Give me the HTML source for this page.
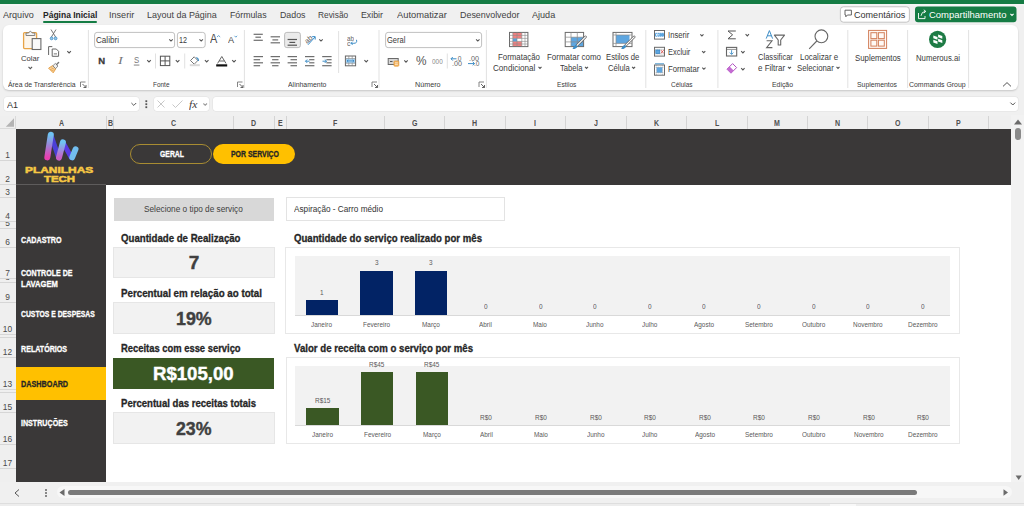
<!DOCTYPE html>
<html><head><meta charset="utf-8"><style>
html,body{margin:0;padding:0;width:1024px;height:506px;overflow:hidden;background:#F0F0F0;}
body{position:relative;font-family:'Liberation Sans', sans-serif;}
.t{position:absolute;white-space:nowrap;}
svg{position:absolute;overflow:visible;}
</style></head><body>
<div style="position:absolute;left:0px;top:0px;width:1024px;height:3.8px;background:#157C44"></div><div style="position:absolute;left:0px;top:3.8px;width:1024px;height:2.2px;background:#F4F5F4"></div><div style="position:absolute;left:43px;top:20.6px;width:54.3px;height:2.0px;background:#157C44;border-radius:1px"></div><div style="position:absolute;left:3px;top:25px;width:1015px;height:65px;background:#FFFFFF;border-radius:6px;box-shadow:0 1px 2px rgba(0,0,0,0.18)"></div><div style="position:absolute;left:3.5px;top:96.6px;width:135.5px;height:14.800000000000011px;background:#fff;border-radius:3px;box-shadow:0 0 0 0.5px #e0e0e0"></div><div style="position:absolute;left:153.6px;top:96.6px;width:55.80000000000001px;height:14.800000000000011px;background:#fff;border-radius:3px;box-shadow:0 0 0 0.5px #e0e0e0"></div><div style="position:absolute;left:213.4px;top:96.6px;width:804.6px;height:14.800000000000011px;background:#fff;border-radius:3px;box-shadow:0 0 0 0.5px #e0e0e0"></div><div style="position:absolute;left:0px;top:115.5px;width:1011px;height:13.5px;background:#EFEFEF"></div><div style="position:absolute;left:106.0px;top:115.5px;width:1.0px;height:13.5px;background:#D4D4D4"></div><div style="position:absolute;left:113.2px;top:115.5px;width:1.0px;height:13.5px;background:#D4D4D4"></div><div style="position:absolute;left:233.0px;top:115.5px;width:1.0px;height:13.5px;background:#D4D4D4"></div><div style="position:absolute;left:273.9px;top:115.5px;width:1.0px;height:13.5px;background:#D4D4D4"></div><div style="position:absolute;left:286.1px;top:115.5px;width:1.0px;height:13.5px;background:#D4D4D4"></div><div style="position:absolute;left:384.0px;top:115.5px;width:1.0px;height:13.5px;background:#D4D4D4"></div><div style="position:absolute;left:444.0px;top:115.5px;width:1.0px;height:13.5px;background:#D4D4D4"></div><div style="position:absolute;left:504.7px;top:115.5px;width:1.0px;height:13.5px;background:#D4D4D4"></div><div style="position:absolute;left:565.0px;top:115.5px;width:1.0px;height:13.5px;background:#D4D4D4"></div><div style="position:absolute;left:625.7px;top:115.5px;width:1.0px;height:13.5px;background:#D4D4D4"></div><div style="position:absolute;left:686.0px;top:115.5px;width:1.0px;height:13.5px;background:#D4D4D4"></div><div style="position:absolute;left:746.7px;top:115.5px;width:1.0px;height:13.5px;background:#D4D4D4"></div><div style="position:absolute;left:807.0px;top:115.5px;width:1.0px;height:13.5px;background:#D4D4D4"></div><div style="position:absolute;left:867.2px;top:115.5px;width:1.0px;height:13.5px;background:#D4D4D4"></div><div style="position:absolute;left:928.0px;top:115.5px;width:1.0px;height:13.5px;background:#D4D4D4"></div><div style="position:absolute;left:988.2px;top:115.5px;width:1.0px;height:13.5px;background:#D4D4D4"></div><div style="position:absolute;left:1010.5px;top:115.5px;width:1.0px;height:13.5px;background:#D4D4D4"></div><div style="position:absolute;left:0px;top:129px;width:16px;height:353px;background:#EFEFEF"></div><div style="position:absolute;left:0px;top:159.5px;width:16px;height:1.0px;background:#D6D6D6"></div><div style="position:absolute;left:0px;top:183.5px;width:16px;height:1.0px;background:#D6D6D6"></div><div style="position:absolute;left:0px;top:196.5px;width:16px;height:1.0px;background:#D6D6D6"></div><div style="position:absolute;left:0px;top:220.5px;width:16px;height:1.0px;background:#D6D6D6"></div><div style="position:absolute;left:0px;top:227.5px;width:16px;height:1.0px;background:#D6D6D6"></div><div style="position:absolute;left:0px;top:246.5px;width:16px;height:1.0px;background:#D6D6D6"></div><div style="position:absolute;left:0px;top:278.0px;width:16px;height:1.0px;background:#D6D6D6"></div><div style="position:absolute;left:0px;top:281.5px;width:16px;height:1.0px;background:#D6D6D6"></div><div style="position:absolute;left:0px;top:302.0px;width:16px;height:1.0px;background:#D6D6D6"></div><div style="position:absolute;left:0px;top:333.5px;width:16px;height:1.0px;background:#D6D6D6"></div><div style="position:absolute;left:0px;top:336.5px;width:16px;height:1.0px;background:#D6D6D6"></div><div style="position:absolute;left:0px;top:357.0px;width:16px;height:1.0px;background:#D6D6D6"></div><div style="position:absolute;left:0px;top:388.5px;width:16px;height:1.0px;background:#D6D6D6"></div><div style="position:absolute;left:0px;top:391.5px;width:16px;height:1.0px;background:#D6D6D6"></div><div style="position:absolute;left:0px;top:411.5px;width:16px;height:1.0px;background:#D6D6D6"></div><div style="position:absolute;left:0px;top:443.5px;width:16px;height:1.0px;background:#D6D6D6"></div><div style="position:absolute;left:0px;top:467.5px;width:16px;height:1.0px;background:#D6D6D6"></div><svg style="left:0;top:115px" width="16" height="14"><polygon points="14,3.2 14,11.8 5.8,11.8" fill="#B4B4B4"/></svg><div style="position:absolute;left:15px;top:116px;width:1px;height:13px;background:#DADADA"></div><div style="position:absolute;left:0px;top:128px;width:16px;height:1px;background:#DADADA"></div><div style="position:absolute;left:16px;top:129px;width:995px;height:353px;background:#FFFFFF"></div><div style="position:absolute;left:16px;top:129px;width:995px;height:55.599999999999994px;background:#3A3838"></div><div style="position:absolute;left:16px;top:184px;width:90px;height:1px;background:#5E5C5C"></div><div style="position:absolute;left:16px;top:185px;width:90px;height:297px;background:#3A3838"></div><div style="position:absolute;left:16px;top:367px;width:90px;height:32.80000000000001px;background:#FFC000"></div><div style="position:absolute;left:130.2px;top:143.6px;width:81.60000000000002px;height:20.400000000000006px;border:1.2px solid #A88C32;border-radius:11px;box-sizing:border-box"></div><div style="position:absolute;left:213.4px;top:144.4px;width:81.99999999999997px;height:19.900000000000006px;background:#FFC000;border-radius:10px"></div><div style="position:absolute;left:113.8px;top:197.8px;width:160.2px;height:23.399999999999977px;background:#D8D8D8"></div><div style="position:absolute;left:286.3px;top:197px;width:219.2px;height:24.19999999999999px;background:#fff;border:1px solid #E3E3E3;box-sizing:border-box"></div><div style="position:absolute;left:113.2px;top:247.3px;width:161.8px;height:31.19999999999999px;background:#F2F2F2;border:1px solid #E6E6E6;box-sizing:border-box"></div><div style="position:absolute;left:113.2px;top:302.1px;width:161.8px;height:31.69999999999999px;background:#F2F2F2;border:1px solid #E6E6E6;box-sizing:border-box"></div><div style="position:absolute;left:113.2px;top:358px;width:161.3px;height:30.80000000000001px;background:#3A5824"></div><div style="position:absolute;left:113.2px;top:412.3px;width:161.8px;height:32.19999999999999px;background:#F2F2F2;border:1px solid #E6E6E6;box-sizing:border-box"></div><div style="position:absolute;left:285px;top:247px;width:674.8px;height:86.60000000000002px;background:#fff;border:1px solid #E8E8E8;box-sizing:border-box"></div><div style="position:absolute;left:294.8px;top:255.7px;width:655.2px;height:59.10000000000002px;background:#F2F2F2"></div><div style="position:absolute;left:294.8px;top:314.8px;width:655.2px;height:1.0px;background:#D9D9D9"></div><div style="position:absolute;left:305.75px;top:299.5px;width:32.299999999999955px;height:15.300000000000011px;background:#022365"></div><div style="position:absolute;left:360.35px;top:270.5px;width:32.299999999999955px;height:44.30000000000001px;background:#022365"></div><div style="position:absolute;left:414.95px;top:270.5px;width:32.299999999999955px;height:44.30000000000001px;background:#022365"></div><div style="position:absolute;left:286px;top:357.3px;width:673.8px;height:86.30000000000001px;background:#fff;border:1px solid #E8E8E8;box-sizing:border-box"></div><div style="position:absolute;left:294.8px;top:366.4px;width:655.2px;height:58.400000000000034px;background:#F2F2F2"></div><div style="position:absolute;left:294.8px;top:424.8px;width:655.2px;height:1.0px;background:#D9D9D9"></div><div style="position:absolute;left:306.35px;top:407.7px;width:32.299999999999955px;height:17.100000000000023px;background:#3A5824"></div><div style="position:absolute;left:360.95000000000005px;top:372px;width:32.299999999999955px;height:52.80000000000001px;background:#3A5824"></div><div style="position:absolute;left:415.55px;top:372px;width:32.299999999999955px;height:52.80000000000001px;background:#3A5824"></div><div style="position:absolute;left:1011px;top:115px;width:13px;height:367px;background:#F2F2F2"></div><svg style="left:1014px;top:119px" width="8" height="6"><polygon points="4,0.5 8,5.5 0,5.5" fill="#6B6B6B"/></svg><div style="position:absolute;left:1015px;top:128px;width:6px;height:12px;background:#8A8A8A;border-radius:3px"></div><svg style="left:1014.6px;top:474.6px" width="8" height="6"><polygon points="0.6,0.4 6.8,0.4 3.7,5" fill="#6B6B6B"/></svg><div style="position:absolute;left:0px;top:482px;width:1024px;height:21px;background:#F0F0F0"></div><div style="position:absolute;left:0px;top:502.6px;width:1024px;height:1.0px;background:#DEDEDE"></div><div style="position:absolute;left:0px;top:503.6px;width:1024px;height:2.3999999999999773px;background:#EDEDED"></div><div style="position:absolute;left:830px;top:503.6px;width:26px;height:2.3999999999999773px;background:#F8F8F8"></div><div style="position:absolute;left:57px;top:486.3px;width:955px;height:11.899999999999977px;background:#F7F7F7;border-radius:6px"></div><svg style="left:14px;top:489px" width="6" height="8"><polyline points="5,0.5 1,4 5,7.5" fill="none" stroke="#555" stroke-width="1"/></svg><div style="position:absolute;left:45px;top:489.4px;width:2px;height:1.8000000000000114px;background:#666;border-radius:1px"></div><div style="position:absolute;left:45px;top:492.2px;width:2px;height:1.8000000000000114px;background:#666;border-radius:1px"></div><div style="position:absolute;left:45px;top:495px;width:2px;height:1.8000000000000114px;background:#666;border-radius:1px"></div><svg style="left:59px;top:489px" width="6" height="7"><polygon points="5.5,0 5.5,7 0.5,3.5" fill="#6B6B6B"/></svg><div style="position:absolute;left:68px;top:490px;width:849px;height:5.300000000000011px;background:#7A7A7A;border-radius:3px"></div><svg style="left:1002.6px;top:489px" width="6" height="7"><polygon points="0.5,0.2 0.5,6.8 5,3.5" fill="#6B6B6B"/></svg><svg style="left:0;top:0" width="1024" height="115" viewBox="0 0 1024 115"><rect x="87.9" y="30" width="1" height="58" fill="#E1E1E1"/><rect x="243.9" y="30" width="1" height="58" fill="#E1E1E1"/><rect x="378.5" y="30" width="1" height="58" fill="#E1E1E1"/><rect x="485.9" y="30" width="1" height="58" fill="#E1E1E1"/><rect x="645.3" y="30" width="1" height="58" fill="#E1E1E1"/><rect x="717.4" y="30" width="1" height="58" fill="#E1E1E1"/><rect x="847.3" y="30" width="1" height="58" fill="#E1E1E1"/><rect x="907.1" y="30" width="1" height="58" fill="#E1E1E1"/><rect x="968.1" y="30" width="1" height="58" fill="#E1E1E1"/><rect x="155.0" y="53.5" width="1" height="15.0" fill="#E1E1E1"/><rect x="184.2" y="53.5" width="1" height="15.0" fill="#E1E1E1"/><rect x="446.8" y="53.5" width="1" height="15.0" fill="#E1E1E1"/><rect x="338.1" y="31" width="1" height="42" fill="#E1E1E1"/><path d="M80.5,87.0 V82.0 H85.5" fill="none" stroke="#777" stroke-width="0.9"/><path d="M82.5,84.0 L86,87.5 M86,85.0 V87.5 H83.5" fill="none" stroke="#555" stroke-width="0.9"/><path d="M237.5,87.0 V82.0 H242.5" fill="none" stroke="#777" stroke-width="0.9"/><path d="M239.5,84.0 L243,87.5 M243,85.0 V87.5 H240.5" fill="none" stroke="#555" stroke-width="0.9"/><path d="M372.0,87.0 V82.0 H377.0" fill="none" stroke="#777" stroke-width="0.9"/><path d="M374.0,84.0 L377.5,87.5 M377.5,85.0 V87.5 H375.0" fill="none" stroke="#555" stroke-width="0.9"/><path d="M479.0,87.0 V82.0 H484.0" fill="none" stroke="#777" stroke-width="0.9"/><path d="M481.0,84.0 L484.5,87.5 M484.5,85.0 V87.5 H482.0" fill="none" stroke="#555" stroke-width="0.9"/><rect x="23.6" y="32.6" width="13" height="16" rx="1" fill="#FDF6EC" stroke="#E7A447" stroke-width="1.3"/><path d="M26,35.5 V33 H28.6 Q30.3,29.6 32.2,33 H34.8 V35.5 Z" fill="#F4F4F4" stroke="#777" stroke-width="0.9"/><rect x="32.2" y="38.6" width="8.7" height="10.9" fill="#FAFAFA" stroke="#6A6A6A" stroke-width="1.1"/><polyline points="28.5,66.89999999999999 30.3,68.7 32.1,66.89999999999999" fill="none" stroke="#555" stroke-width="1.1"/><path d="M51,29.5 L55.6,37 M56,29.5 L51.4,37" stroke="#666" stroke-width="0.9" fill="none"/><circle cx="51.6" cy="38.4" r="1.4" fill="#9CC8E6" stroke="#3D8DC6" stroke-width="0.8"/><circle cx="55.6" cy="38.4" r="1.4" fill="#9CC8E6" stroke="#3D8DC6" stroke-width="0.8"/><path d="M48.6,55 V46.6 H52.3" fill="none" stroke="#666" stroke-width="1"/><path d="M52.2,56.3 V49 H56.3 L58.6,51.3 V56.3 Z" fill="#fff" stroke="#666" stroke-width="1"/><rect x="53.8" y="53" width="3.2" height="1.6" fill="#AAA"/><polyline points="67.3,51.2 69.1,53.0 70.89999999999999,51.2" fill="none" stroke="#555" stroke-width="1.1"/><path d="M48.6,68.2 L52.6,65.6 L55.8,68.8 L53.2,72.8 Z" fill="#F7D3A0" stroke="#E39A3B" stroke-width="0.9"/><path d="M50.2,69.4 L53.6,70.8 M51.2,67.8 L54.6,69.4" stroke="#E39A3B" stroke-width="0.7"/><path d="M52.8,65.8 L55.4,63.4 L58,66 L55.6,68.6 Z" fill="#EEE" stroke="#777" stroke-width="0.8"/><path d="M56.6,64.6 L58.6,62.6" stroke="#777" stroke-width="1.4" stroke-linecap="round"/><rect x="94.6" y="32.4" width="80" height="15.2" rx="2.5" fill="#fff" stroke="#B9B9B9" stroke-width="0.9"/><rect x="177.4" y="32.4" width="27.8" height="15.2" rx="2.5" fill="#fff" stroke="#B9B9B9" stroke-width="0.9"/><polyline points="169.3,39.35 171,41.050000000000004 172.7,39.35" fill="none" stroke="#555" stroke-width="1.1"/><polyline points="199.5,39.35 201.2,41.050000000000004 202.89999999999998,39.35" fill="none" stroke="#555" stroke-width="1.1"/><polyline points="217,37 218.6,35.6 220.2,37" fill="none" stroke="#3D8DC6" stroke-width="0.8"/><polyline points="234.5,35.8 235.8,37.2 237.1,35.8" fill="none" stroke="#3D8DC6" stroke-width="0.8"/><rect x="133.8" y="64.6" width="5.6" height="0.9" fill="#777"/><polyline points="147.2,60.1 149,61.9 150.8,60.1" fill="none" stroke="#555" stroke-width="1.1"/><rect x="160.4" y="56.2" width="9.4" height="9.4" fill="none" stroke="#555" stroke-width="1"/><path d="M165.1,56.2 V65.6 M160.4,60.9 H169.8" stroke="#555" stroke-width="1"/><polyline points="175.79999999999998,60.1 177.6,61.9 179.4,60.1" fill="none" stroke="#555" stroke-width="1.1"/><path d="M190.5,60.5 L194.2,56.8 L197.9,60.5 L194.2,64.2 Z" fill="#fff" stroke="#666" stroke-width="0.9"/><path d="M196.3,57.5 Q198.6,58.4 198.4,61" fill="none" stroke="#3D8DC6" stroke-width="1.2"/><rect x="189.8" y="64.2" width="10" height="2" fill="#D9D9D9"/><polyline points="204.89999999999998,60.1 206.7,61.9 208.5,60.1" fill="none" stroke="#555" stroke-width="1.1"/><path d="M217.6,63.4 L221.8,56.5 L226,63.4 M219.2,61 H224.4" fill="none" stroke="#555" stroke-width="0.9"/><rect x="216.2" y="64.3" width="11" height="2.2" fill="#111"/><polyline points="232.2,60.1 234,61.9 235.8,60.1" fill="none" stroke="#555" stroke-width="1.1"/><rect x="253.6" y="33.699999999999996" width="9.2" height="1.2" fill="#6E6E6E"/><rect x="255.4" y="36.6" width="5.6000000000000005" height="1.2" fill="#6E6E6E"/><rect x="253.6" y="39.699999999999996" width="9.2" height="1.2" fill="#6E6E6E"/><rect x="270.6" y="36.199999999999996" width="9.4" height="1.2" fill="#6E6E6E"/><rect x="272.40000000000003" y="39.3" width="5.8" height="1.2" fill="#6E6E6E"/><rect x="270.6" y="42.199999999999996" width="9.4" height="1.2" fill="#6E6E6E"/><rect x="284.6" y="32.4" width="15.8" height="15.2" rx="2.2" fill="#EBEBEB" stroke="#B5B5B5" stroke-width="0.9"/><rect x="287.6" y="38.9" width="9.4" height="1.2" fill="#555"/><rect x="289.40000000000003" y="41.8" width="5.8" height="1.2" fill="#555"/><rect x="287.6" y="44.6" width="9.4" height="1.2" fill="#555"/><text x="304.2" y="42.6" transform="rotate(-40 307.5 39.5)" font-family="Liberation Sans" font-size="7.4" fill="#5A5A5A">ab</text><path d="M308,44.8 L315,37 M312.2,36.6 H315.2 V39.6" fill="none" stroke="#3D8DC6" stroke-width="1"/><polyline points="319.3,39.35 321,41.050000000000004 322.7,39.35" fill="none" stroke="#555" stroke-width="1.1"/><rect x="253.6" y="56.0" width="9.4" height="1.2" fill="#6E6E6E"/><rect x="253.6" y="59.1" width="6.5" height="1.2" fill="#6E6E6E"/><rect x="253.6" y="62.199999999999996" width="9.4" height="1.2" fill="#6E6E6E"/><rect x="253.6" y="65.10000000000001" width="6.5" height="1.2" fill="#6E6E6E"/><rect x="270.6" y="56.0" width="9.4" height="1.2" fill="#6E6E6E"/><rect x="272.1" y="59.1" width="6.4" height="1.2" fill="#6E6E6E"/><rect x="270.6" y="62.199999999999996" width="9.4" height="1.2" fill="#6E6E6E"/><rect x="272.1" y="65.10000000000001" width="6.4" height="1.2" fill="#6E6E6E"/><rect x="287.6" y="56.0" width="9.4" height="1.2" fill="#6E6E6E"/><rect x="290.5" y="59.1" width="6.5" height="1.2" fill="#6E6E6E"/><rect x="287.6" y="62.199999999999996" width="9.4" height="1.2" fill="#6E6E6E"/><rect x="290.5" y="65.10000000000001" width="6.5" height="1.2" fill="#6E6E6E"/><rect x="305" y="56.0" width="9.4" height="1.2" fill="#6E6E6E"/><rect x="309.2" y="59.1" width="5.2" height="1.2" fill="#6E6E6E"/><rect x="309.2" y="62.199999999999996" width="5.2" height="1.2" fill="#6E6E6E"/><rect x="305" y="65.10000000000001" width="9.4" height="1.2" fill="#6E6E6E"/><path d="M305.5,61.2 H309.5 M307.2,59.5 L305.5,61.2 L307.2,62.9" fill="none" stroke="#3D8DC6" stroke-width="1"/><rect x="322.2" y="56.0" width="9.4" height="1.2" fill="#6E6E6E"/><rect x="326.4" y="59.1" width="5.2" height="1.2" fill="#6E6E6E"/><rect x="326.4" y="62.199999999999996" width="5.2" height="1.2" fill="#6E6E6E"/><rect x="322.2" y="65.10000000000001" width="9.4" height="1.2" fill="#6E6E6E"/><path d="M322.5,61.2 H326.5 M324.8,59.5 L326.5,61.2 L324.8,62.9" fill="none" stroke="#3D8DC6" stroke-width="1"/><path d="M356.5,39.8 Q357.5,43.3 353.8,43.3 H351 M352.6,41.7 L351,43.3 L352.6,44.9" fill="none" stroke="#3D8DC6" stroke-width="1"/><rect x="345.4" y="56" width="10.2" height="9.8" fill="#fff" stroke="#666" stroke-width="1"/><rect x="346" y="58.6" width="9" height="4.6" fill="#A9D3F2"/><path d="M345.4,58.6 H355.6 M345.4,63.2 H355.6 M348.8,56 V58.6 M352.2,56 V58.6 M348.8,63.2 V65.8 M352.2,63.2 V65.8" stroke="#7A7A7A" stroke-width="0.6"/><path d="M347,60.9 H354 M348.4,59.8 L347,60.9 L348.4,62 M352.6,59.8 L354,60.9 L352.6,62" fill="none" stroke="#2F7FBF" stroke-width="0.7"/><polyline points="364.4,60.1 366.2,61.9 368.0,60.1" fill="none" stroke="#555" stroke-width="1.1"/><rect x="385.6" y="32.4" width="96" height="15.2" rx="2.5" fill="#fff" stroke="#B9B9B9" stroke-width="0.9"/><polyline points="476.1,39.35 477.8,41.050000000000004 479.5,39.35" fill="none" stroke="#555" stroke-width="1.1"/><rect x="388.2" y="58.5" width="10" height="6" fill="#D6D6D6" stroke="#6A6A6A" stroke-width="1"/><path d="M390,61.5 H392.5" stroke="#555" stroke-width="1"/><rect x="393.9" y="60.9" width="5" height="5.4" rx="1" fill="#F3B35F" stroke="#E39A3B" stroke-width="0.6"/><path d="M395,62.8 H397.8 M395,64.4 H397.8" stroke="#fff" stroke-width="0.6"/><polyline points="404.3,60.449999999999996 406,62.15 407.7,60.449999999999996" fill="none" stroke="#555" stroke-width="1.1"/><path d="M451,58.8 H456.5 M452.8,57 L451,58.8 L452.8,60.6" fill="none" stroke="#3D8DC6" stroke-width="1"/><path d="M468,63.6 H474.5 M472.7,61.8 L474.5,63.6 L472.7,65.4" fill="none" stroke="#3D8DC6" stroke-width="1"/><rect x="512.8" y="32.4" width="9" height="6" fill="#F08080"/><rect x="512.8" y="41.4" width="9" height="5.2" fill="#F08080"/><rect x="512.8" y="38.4" width="4.2" height="3" fill="#5AA0DC"/><rect x="509.5" y="32.4" width="18.4" height="14.2" fill="none" stroke="#6A6A6A" stroke-width="1"/><path d="M512.8,32.4 V46.6 M517,32.4 V46.6 M521.8,32.4 V46.6 M525,32.4 V46.6 M509.5,35.4 H527.9 M509.5,38.4 H527.9 M509.5,41.4 H527.9 M509.5,44 H527.9" stroke="#8A8A8A" stroke-width="0.6"/><rect x="571" y="37.2" width="12.6" height="9.4" fill="#5EA6E0"/><rect x="565.2" y="32.4" width="18.4" height="14.2" fill="none" stroke="#6A6A6A" stroke-width="1"/><path d="M571,32.4 V46.6 M577.3,32.4 V46.6 M565.2,37.2 H583.6 M565.2,41.9 H583.6" stroke="#8A8A8A" stroke-width="0.7"/><path d="M585.5,36.8 L576.5,45.8" stroke="#666" stroke-width="2.6" stroke-linecap="round"/><path d="M585.5,36.8 L576.5,45.8" stroke="#fff" stroke-width="1.2" stroke-linecap="round"/><path d="M576.5,45 Q574,45 572.5,49 Q576.5,49.3 577.5,46.2 Z" fill="#3D8DC6"/><rect x="616" y="35" width="13.5" height="8.4" fill="#5EA6E0"/><rect x="613" y="32.4" width="19" height="14.2" fill="none" stroke="#6A6A6A" stroke-width="1"/><path d="M616,32.4 V46.6 M613,35 H632 M613,43.4 H632" stroke="#8A8A8A" stroke-width="0.7"/><path d="M634.2,36.8 L625.2,45.8" stroke="#666" stroke-width="2.6" stroke-linecap="round"/><path d="M634.2,36.8 L625.2,45.8" stroke="#fff" stroke-width="1.2" stroke-linecap="round"/><path d="M625.2,45 Q622.7,45 621.2,49 Q625.2,49.3 626.2,46.2 Z" fill="#3D8DC6"/><polyline points="538.5,66.85 540,68.35 541.5,66.85" fill="none" stroke="#555" stroke-width="1.1"/><polyline points="585.0,66.85 586.5,68.35 588.0,66.85" fill="none" stroke="#555" stroke-width="1.1"/><polyline points="632.1,66.85 633.6,68.35 635.1,66.85" fill="none" stroke="#555" stroke-width="1.1"/><rect x="654.5" y="30.5" width="10" height="8.6" fill="#fff" stroke="#6A6A6A" stroke-width="1"/><rect x="655" y="32.8" width="9" height="4" fill="#5EA6E0"/><path d="M655,32.8 H664 M655,36.8 H664" stroke="#fff" stroke-width="0.7" stroke-dasharray="1.2 0.8"/><path d="M656,34.8 H659.5 M657.4,33.6 L656,34.8 L657.4,36" fill="none" stroke="#fff" stroke-width="0.8"/><polyline points="700.3,34.300000000000004 701.9,35.9 703.5,34.300000000000004" fill="none" stroke="#555" stroke-width="1.1"/><rect x="654.5" y="47.3" width="10" height="8.8" fill="#fff" stroke="#6A6A6A" stroke-width="1"/><path d="M654.5,49.4 H664.5 M654.5,54.0 H664.5" stroke="#999" stroke-width="0.7" stroke-dasharray="1.2 0.8"/><rect x="655.8" y="50.0" width="4" height="3.6" fill="#5EA6E0" stroke="#2F7FBF" stroke-width="0.7"/><path d="M660.9,50.099999999999994 L663.7,53.3 M663.7,50.099999999999994 L660.9,53.3" stroke="#D9534F" stroke-width="0.9"/><polyline points="702.1,51.1 703.7,52.699999999999996 705.3000000000001,51.1" fill="none" stroke="#555" stroke-width="1.1"/><rect x="654.5" y="65.0" width="10" height="10.2" fill="#fff" stroke="#6A6A6A" stroke-width="1"/><rect x="656.6" y="67.2" width="5.8" height="5.6" fill="#5EA6E0"/><path d="M654.5,67.2 H664.5 M654.5,72.8 H664.5 M656.6,65.0 V75.2 M662.4,65.0 V75.2" stroke="#999" stroke-width="0.6" stroke-dasharray="1 0.8"/><path d="M655,63.8 H664" stroke="#3D8DC6" stroke-width="0.9"/><polyline points="702.3,67.7 703.9,69.3 705.5,67.7" fill="none" stroke="#555" stroke-width="1.1"/><path d="M735.8,31 H728 L732.6,34.8 L728,38.8 H735.8" fill="none" stroke="#555" stroke-width="1"/><polyline points="745.5999999999999,34.15 747.3,35.85 749.0,34.15" fill="none" stroke="#555" stroke-width="1.1"/><rect x="726.5" y="47.4" width="10.2" height="8.6" fill="#fff" stroke="#666" stroke-width="1.1"/><path d="M726.5,49.4 H736.7" stroke="#666" stroke-width="0.7"/><path d="M731.6,50.2 V54.3 M729.8,52.6 L731.6,54.4 L733.4,52.6" fill="none" stroke="#3D8DC6" stroke-width="0.9"/><polyline points="741.1999999999999,51.15 742.9,52.85 744.6,51.15" fill="none" stroke="#555" stroke-width="1.1"/><path d="M727,69.2 L732.6,63.6 L736.6,67.6 L731,73.2 Z" fill="#fff" stroke="#B04FC0" stroke-width="1"/><path d="M727,69.2 L729.6,66.6 L733.6,70.6 L731,73.2 Z" fill="#C46BD2"/><polyline points="741.1999999999999,68.15 742.9,69.85 744.6,68.15" fill="none" stroke="#555" stroke-width="1.1"/><path d="M766.2,38.6 L769.4,30.6 L772.6,38.6 M767.4,35.8 H771.4" fill="none" stroke="#3D8DC6" stroke-width="1"/><path d="M766.6,40.8 H772 L766.6,47.6 H772.4" fill="none" stroke="#666" stroke-width="1.1"/><path d="M774.4,35.1 H784.5 L780.7,40 V45 H778.2 V40 Z" fill="none" stroke="#666" stroke-width="1.1" stroke-linejoin="round"/><polyline points="788.0,66.85 789.5,68.35 791.0,66.85" fill="none" stroke="#555" stroke-width="1.1"/><circle cx="821.4" cy="36.3" r="6.4" fill="none" stroke="#666" stroke-width="1.1"/><path d="M816.8,41 L809.2,48.8" stroke="#666" stroke-width="1.1"/><polyline points="836.5,66.85 838,68.35 839.5,66.85" fill="none" stroke="#555" stroke-width="1.1"/><rect x="868.6" y="30.4" width="18" height="18" fill="#FFF9F5" stroke="#D27F5A" stroke-width="1"/><rect x="870.9" y="32.7" width="5.9" height="5.9" fill="none" stroke="#D27F5A" stroke-width="1"/><rect x="878.4" y="32.7" width="5.9" height="5.9" fill="none" stroke="#D27F5A" stroke-width="1"/><rect x="870.9" y="40.2" width="5.9" height="5.9" fill="none" stroke="#D27F5A" stroke-width="1"/><rect x="878.4" y="40.2" width="5.9" height="5.9" fill="none" stroke="#D27F5A" stroke-width="1"/><circle cx="937.6" cy="39.4" r="8.6" fill="#1E7B45"/><polygon points="933.3,35.4 937.5,36.9 937.5,39.699999999999996 933.3,38.199999999999996" fill="#fff"/><polygon points="938.1,34.4 942.3000000000001,35.9 942.3000000000001,38.699999999999996 938.1,37.199999999999996" fill="#fff"/><polygon points="933.3,39.8 937.5,41.3 937.5,44.099999999999994 933.3,42.599999999999994" fill="#fff"/><polygon points="938.1,38.8 942.3000000000001,40.3 942.3000000000001,43.099999999999994 938.1,41.599999999999994" fill="#fff"/><polyline points="1003,86.4 1007,82.6 1011,86.4" fill="none" stroke="#555" stroke-width="1"/><rect x="840.4" y="6.8" width="69" height="15.4" rx="3" fill="#fff" stroke="#BDBDBD" stroke-width="0.9"/><path d="M845,10.2 H851.4 V15 H847.4 L845.8,16.8 V15 H845 Z" fill="none" stroke="#555" stroke-width="0.9"/><rect x="915" y="6.6" width="101.5" height="15.6" rx="3" fill="#157C44"/><path d="M918.5,13 V18.6 H925 V16 M921,15.8 Q921.5,11.6 925.5,11.4 M923.8,9.8 L925.8,11.4 L923.8,13" fill="none" stroke="#fff" stroke-width="0.9"/><polyline points="1010.4,13.799999999999999 1012,15.4 1013.6,13.799999999999999" fill="none" stroke="#fff" stroke-width="1.1"/><polyline points="131.4,103.0 133.8,105.4 136.20000000000002,103.0" fill="none" stroke="#555" stroke-width="1"/><rect x="145.4" y="100.3" width="1.8" height="1.8" fill="#555"/><rect x="145.4" y="103.3" width="1.8" height="1.8" fill="#555"/><rect x="145.4" y="106.3" width="1.8" height="1.8" fill="#555"/><path d="M157.5,100.5 L164.5,107.5 M164.5,100.5 L157.5,107.5" stroke="#C2C2C2" stroke-width="0.9"/><polyline points="172.5,104.5 175.5,107.5 182.5,100.5" fill="none" stroke="#C2C2C2" stroke-width="0.9"/><polyline points="203.39999999999998,103.5 205.2,105.30000000000001 207.0,103.5" fill="none" stroke="#999" stroke-width="1.1"/><polyline points="1010.4,102.6 1012.8,105.0 1015.1999999999999,102.6" fill="none" stroke="#555" stroke-width="1"/></svg><div style="position:absolute;left:0;top:129.5px;width:16px;height:30.5px;overflow:hidden"><div style="position:absolute;left:0;width:15px;text-align:center;top:19.10px;font-size:8.4px;line-height:12px;color:#4A4A4A">1</div></div><div style="position:absolute;left:0;top:160.5px;width:16px;height:23.5px;overflow:hidden"><div style="position:absolute;left:0;width:15px;text-align:center;top:12.10px;font-size:8.4px;line-height:12px;color:#4A4A4A">2</div></div><div style="position:absolute;left:0;top:184.5px;width:16px;height:12.5px;overflow:hidden"><div style="position:absolute;left:0;width:15px;text-align:center;top:1.10px;font-size:8.4px;line-height:12px;color:#4A4A4A">3</div></div><div style="position:absolute;left:0;top:197.5px;width:16px;height:23.5px;overflow:hidden"><div style="position:absolute;left:0;width:15px;text-align:center;top:12.10px;font-size:8.4px;line-height:12px;color:#4A4A4A">4</div></div><div style="position:absolute;left:0;top:221.5px;width:16px;height:6.5px;overflow:hidden"><div style="position:absolute;left:0;width:15px;text-align:center;top:-4.90px;font-size:8.4px;line-height:12px;color:#4A4A4A">5</div></div><div style="position:absolute;left:0;top:228.5px;width:16px;height:18.5px;overflow:hidden"><div style="position:absolute;left:0;width:15px;text-align:center;top:7.10px;font-size:8.4px;line-height:12px;color:#4A4A4A">6</div></div><div style="position:absolute;left:0;top:247.5px;width:16px;height:31.0px;overflow:hidden"><div style="position:absolute;left:0;width:15px;text-align:center;top:19.60px;font-size:8.4px;line-height:12px;color:#4A4A4A">7</div></div><div style="position:absolute;left:0;top:279.0px;width:16px;height:3.0px;overflow:hidden"><div style="position:absolute;left:0;width:15px;text-align:center;top:-8.40px;font-size:8.4px;line-height:12px;color:#4A4A4A">8</div></div><div style="position:absolute;left:0;top:282.5px;width:16px;height:20.0px;overflow:hidden"><div style="position:absolute;left:0;width:15px;text-align:center;top:8.60px;font-size:8.4px;line-height:12px;color:#4A4A4A">9</div></div><div style="position:absolute;left:0;top:303.0px;width:16px;height:31.0px;overflow:hidden"><div style="position:absolute;left:0;width:15px;text-align:center;top:19.60px;font-size:8.4px;line-height:12px;color:#4A4A4A">10</div></div><div style="position:absolute;left:0;top:334.5px;width:16px;height:2.5px;overflow:hidden"><div style="position:absolute;left:0;width:15px;text-align:center;top:-8.90px;font-size:8.4px;line-height:12px;color:#4A4A4A">11</div></div><div style="position:absolute;left:0;top:337.5px;width:16px;height:20.0px;overflow:hidden"><div style="position:absolute;left:0;width:15px;text-align:center;top:8.60px;font-size:8.4px;line-height:12px;color:#4A4A4A">12</div></div><div style="position:absolute;left:0;top:358.0px;width:16px;height:31.0px;overflow:hidden"><div style="position:absolute;left:0;width:15px;text-align:center;top:19.60px;font-size:8.4px;line-height:12px;color:#4A4A4A">13</div></div><div style="position:absolute;left:0;top:389.5px;width:16px;height:2.5px;overflow:hidden"><div style="position:absolute;left:0;width:15px;text-align:center;top:-8.90px;font-size:8.4px;line-height:12px;color:#4A4A4A">14</div></div><div style="position:absolute;left:0;top:392.5px;width:16px;height:19.5px;overflow:hidden"><div style="position:absolute;left:0;width:15px;text-align:center;top:8.10px;font-size:8.4px;line-height:12px;color:#4A4A4A">15</div></div><div style="position:absolute;left:0;top:412.5px;width:16px;height:31.5px;overflow:hidden"><div style="position:absolute;left:0;width:15px;text-align:center;top:20.10px;font-size:8.4px;line-height:12px;color:#4A4A4A">16</div></div><div style="position:absolute;left:0;top:444.5px;width:16px;height:23.5px;overflow:hidden"><div style="position:absolute;left:0;width:15px;text-align:center;top:12.10px;font-size:8.4px;line-height:12px;color:#4A4A4A">17</div></div><svg style="left:0;top:0" width="120" height="190" viewBox="0 0 120 190">
<defs>
<linearGradient id="lg1" x1="0" y1="1" x2="0" y2="0"><stop offset="0" stop-color="#E93FB0"/><stop offset="0.55" stop-color="#9A86D8"/><stop offset="1" stop-color="#6FC3F2"/></linearGradient>
<linearGradient id="lg2" x1="0" y1="1" x2="0" y2="0"><stop offset="0" stop-color="#C85FC8"/><stop offset="1" stop-color="#6FC3F2"/></linearGradient>
</defs>
<path d="M50.8,134.8 L58.6,157.4" stroke="#4B3FD6" stroke-width="5" stroke-linecap="round"/>
<path d="M62.9,142.4 L71.4,157.6" stroke="#5A3BE4" stroke-width="5" stroke-linecap="round"/>
<path d="M47.3,157.4 L50.8,134.8" stroke="url(#lg1)" stroke-width="6" stroke-linecap="round"/>
<path d="M59,157.6 L62.9,142.4" stroke="url(#lg2)" stroke-width="6" stroke-linecap="round"/>
<path d="M72.2,157.4 L75.6,149.2" stroke="#72BEF0" stroke-width="5.8" stroke-linecap="round"/>
</svg>
<div class="t" style="left:3.00px;top:8.93px;font-size:9.8px;line-height:12.74px;font-weight:400;color:#424242;transform:scaleX(0.9242);transform-origin:0 50%;">Arquivo</div><div class="t" style="left:43.00px;top:8.93px;font-size:9.8px;line-height:12.74px;font-weight:700;color:#242424;transform:scaleX(0.8671);transform-origin:0 50%;">Página Inicial</div><div class="t" style="left:109.00px;top:8.93px;font-size:9.8px;line-height:12.74px;font-weight:400;color:#424242;transform:scaleX(0.9253);transform-origin:0 50%;">Inserir</div><div class="t" style="left:147.00px;top:8.93px;font-size:9.8px;line-height:12.74px;font-weight:400;color:#424242;transform:scaleX(0.9152);transform-origin:0 50%;">Layout da Página</div><div class="t" style="left:230.00px;top:8.93px;font-size:9.8px;line-height:12.74px;font-weight:400;color:#424242;transform:scaleX(0.8961);transform-origin:0 50%;">Fórmulas</div><div class="t" style="left:279.70px;top:8.93px;font-size:9.8px;line-height:12.74px;font-weight:400;color:#424242;transform:scaleX(0.9002);transform-origin:0 50%;">Dados</div><div class="t" style="left:318.30px;top:8.93px;font-size:9.8px;line-height:12.74px;font-weight:400;color:#424242;transform:scaleX(0.8530);transform-origin:0 50%;">Revisão</div><div class="t" style="left:361.40px;top:8.93px;font-size:9.8px;line-height:12.74px;font-weight:400;color:#424242;transform:scaleX(0.8980);transform-origin:0 50%;">Exibir</div><div class="t" style="left:396.60px;top:8.93px;font-size:9.8px;line-height:12.74px;font-weight:400;color:#424242;transform:scaleX(0.9525);transform-origin:0 50%;">Automatizar</div><div class="t" style="left:459.60px;top:8.93px;font-size:9.8px;line-height:12.74px;font-weight:400;color:#424242;transform:scaleX(0.9088);transform-origin:0 50%;">Desenvolvedor</div><div class="t" style="left:531.60px;top:8.93px;font-size:9.8px;line-height:12.74px;font-weight:400;color:#424242;transform:scaleX(0.9257);transform-origin:0 50%;">Ajuda</div><div class="t" style="left:7.00px;top:98.53px;font-size:9.5px;line-height:12.35px;font-weight:400;color:#333;transform:scaleX(0.9462);transform-origin:0 50%;">A1</div><div class="t" style="left:58.71px;top:117.98px;font-size:8.8px;line-height:11.44px;font-weight:700;color:#505050;transform:scaleX(0.8000);transform-origin:0 50%;">A</div><div class="t" style="left:107.56px;top:117.98px;font-size:8.8px;line-height:11.44px;font-weight:700;color:#505050;transform:scaleX(0.8000);transform-origin:0 50%;">B</div><div class="t" style="left:171.06px;top:117.98px;font-size:8.8px;line-height:11.44px;font-weight:700;color:#505050;transform:scaleX(0.8000);transform-origin:0 50%;">C</div><div class="t" style="left:251.41px;top:117.98px;font-size:8.8px;line-height:11.44px;font-weight:700;color:#505050;transform:scaleX(0.8000);transform-origin:0 50%;">D</div><div class="t" style="left:278.15px;top:117.98px;font-size:8.8px;line-height:11.44px;font-weight:700;color:#505050;transform:scaleX(0.8000);transform-origin:0 50%;">E</div><div class="t" style="left:333.40px;top:117.98px;font-size:8.8px;line-height:11.44px;font-weight:700;color:#505050;transform:scaleX(0.8000);transform-origin:0 50%;">F</div><div class="t" style="left:411.76px;top:117.98px;font-size:8.8px;line-height:11.44px;font-weight:700;color:#505050;transform:scaleX(0.8000);transform-origin:0 50%;">G</div><div class="t" style="left:472.31px;top:117.98px;font-size:8.8px;line-height:11.44px;font-weight:700;color:#505050;transform:scaleX(0.8000);transform-origin:0 50%;">H</div><div class="t" style="left:534.37px;top:117.98px;font-size:8.8px;line-height:11.44px;font-weight:700;color:#505050;transform:scaleX(0.8000);transform-origin:0 50%;">I</div><div class="t" style="left:593.89px;top:117.98px;font-size:8.8px;line-height:11.44px;font-weight:700;color:#505050;transform:scaleX(0.8000);transform-origin:0 50%;">J</div><div class="t" style="left:653.81px;top:117.98px;font-size:8.8px;line-height:11.44px;font-weight:700;color:#505050;transform:scaleX(0.8000);transform-origin:0 50%;">K</div><div class="t" style="left:714.70px;top:117.98px;font-size:8.8px;line-height:11.44px;font-weight:700;color:#505050;transform:scaleX(0.8000);transform-origin:0 50%;">L</div><div class="t" style="left:774.42px;top:117.98px;font-size:8.8px;line-height:11.44px;font-weight:700;color:#505050;transform:scaleX(0.8000);transform-origin:0 50%;">M</div><div class="t" style="left:835.06px;top:117.98px;font-size:8.8px;line-height:11.44px;font-weight:700;color:#505050;transform:scaleX(0.8000);transform-origin:0 50%;">N</div><div class="t" style="left:895.36px;top:117.98px;font-size:8.8px;line-height:11.44px;font-weight:700;color:#505050;transform:scaleX(0.8000);transform-origin:0 50%;">O</div><div class="t" style="left:956.25px;top:117.98px;font-size:8.8px;line-height:11.44px;font-weight:700;color:#505050;transform:scaleX(0.8000);transform-origin:0 50%;">P</div><div class="t" style="left:21.30px;top:235.41px;font-size:8.9px;line-height:11.57px;font-weight:700;color:#FFFFFF;transform:scaleX(0.8072);transform-origin:0 50%;-webkit-text-stroke:0.30px #FFFFFF;">CADASTRO</div><div class="t" style="left:21.30px;top:268.11px;font-size:8.9px;line-height:11.57px;font-weight:700;color:#FFFFFF;transform:scaleX(0.7973);transform-origin:0 50%;-webkit-text-stroke:0.30px #FFFFFF;">CONTROLE DE</div><div class="t" style="left:21.30px;top:279.11px;font-size:8.9px;line-height:11.57px;font-weight:700;color:#FFFFFF;transform:scaleX(0.8546);transform-origin:0 50%;-webkit-text-stroke:0.30px #FFFFFF;">LAVAGEM</div><div class="t" style="left:21.30px;top:308.61px;font-size:8.9px;line-height:11.57px;font-weight:700;color:#FFFFFF;transform:scaleX(0.7686);transform-origin:0 50%;-webkit-text-stroke:0.30px #FFFFFF;">CUSTOS E DESPESAS</div><div class="t" style="left:21.30px;top:344.41px;font-size:8.9px;line-height:11.57px;font-weight:700;color:#FFFFFF;transform:scaleX(0.8013);transform-origin:0 50%;-webkit-text-stroke:0.30px #FFFFFF;">RELATÓRIOS</div><div class="t" style="left:21.30px;top:378.91px;font-size:8.9px;line-height:11.57px;font-weight:700;color:#262626;transform:scaleX(0.8165);transform-origin:0 50%;-webkit-text-stroke:0.30px #262626;">DASHBOARD</div><div class="t" style="left:21.30px;top:418.41px;font-size:8.9px;line-height:11.57px;font-weight:700;color:#FFFFFF;transform:scaleX(0.8026);transform-origin:0 50%;-webkit-text-stroke:0.30px #FFFFFF;">INSTRUÇÕES</div><div class="t" style="left:159.80px;top:149.27px;font-size:8.5px;line-height:11.05px;font-weight:700;color:#FFFFFF;transform:scaleX(0.8067);transform-origin:0 50%;-webkit-text-stroke:0.30px #FFFFFF;">GERAL</div><div class="t" style="left:230.80px;top:149.47px;font-size:8.5px;line-height:11.05px;font-weight:700;color:#262626;transform:scaleX(0.8151);transform-origin:0 50%;-webkit-text-stroke:0.30px #262626;">POR SERVIÇO</div><div class="t" style="left:143.50px;top:204.22px;font-size:9.2px;line-height:11.96px;font-weight:400;color:#404040;transform:scaleX(0.8997);transform-origin:0 50%;">Selecione o tipo de serviço</div><div class="t" style="left:294.00px;top:203.52px;font-size:9.2px;line-height:11.96px;font-weight:400;color:#333;transform:scaleX(0.8938);transform-origin:0 50%;">Aspiração - Carro médio</div><div class="t" style="left:120.80px;top:231.68px;font-size:10.5px;line-height:13.65px;font-weight:700;color:#262626;transform:scaleX(0.9183);transform-origin:0 50%;-webkit-text-stroke:0.30px #262626;">Quantidade de Realização</div><div class="t" style="left:188.71px;top:251.35px;font-size:19px;line-height:24.7px;font-weight:700;color:#404040;-webkit-text-stroke:0.40px #404040;">7</div><div class="t" style="left:121.00px;top:286.68px;font-size:10.5px;line-height:13.65px;font-weight:700;color:#262626;transform:scaleX(0.9293);transform-origin:0 50%;-webkit-text-stroke:0.30px #262626;">Percentual em relação ao total</div><div class="t" style="left:175.95px;top:308.12px;font-size:17.5px;line-height:22.75px;font-weight:700;color:#404040;transform:scaleX(1.0191);transform-origin:0 50%;-webkit-text-stroke:0.40px #404040;">19%</div><div class="t" style="left:121.00px;top:341.88px;font-size:10.5px;line-height:13.65px;font-weight:700;color:#262626;transform:scaleX(0.8947);transform-origin:0 50%;-webkit-text-stroke:0.30px #262626;">Receitas com esse serviço</div><div class="t" style="left:153.40px;top:363.0px;font-size:18px;line-height:23.4px;font-weight:700;color:#FFFFFF;transform:scaleX(1.0323);transform-origin:0 50%;-webkit-text-stroke:0.40px #FFFFFF;">R$105,00</div><div class="t" style="left:121.00px;top:397.27px;font-size:10.5px;line-height:13.65px;font-weight:700;color:#262626;transform:scaleX(0.9106);transform-origin:0 50%;-webkit-text-stroke:0.30px #262626;">Percentual das receitas totais</div><div class="t" style="left:176.05px;top:417.82px;font-size:17.5px;line-height:22.75px;font-weight:700;color:#404040;transform:scaleX(1.0134);transform-origin:0 50%;-webkit-text-stroke:0.40px #404040;">23%</div><div class="t" style="left:294.00px;top:232.38px;font-size:10.5px;line-height:13.65px;font-weight:700;color:#262626;transform:scaleX(0.9153);transform-origin:0 50%;-webkit-text-stroke:0.30px #262626;">Quantidade do serviço realizado por mês</div><div class="t" style="left:311.35px;top:319.79px;font-size:7.4px;line-height:9.62px;font-weight:400;color:#595959;transform:scaleX(0.8700);transform-origin:0 50%;">Janeiro</div><div class="t" style="left:320.11px;top:288.39px;font-size:7.4px;line-height:9.62px;font-weight:400;color:#595959;transform:scaleX(0.8700);transform-origin:0 50%;">1</div><div class="t" style="left:362.92px;top:319.79px;font-size:7.4px;line-height:9.62px;font-weight:400;color:#595959;transform:scaleX(0.8700);transform-origin:0 50%;">Fevereiro</div><div class="t" style="left:374.71px;top:258.39px;font-size:7.4px;line-height:9.62px;font-weight:400;color:#595959;transform:scaleX(0.8700);transform-origin:0 50%;">3</div><div class="t" style="left:422.16px;top:319.79px;font-size:7.4px;line-height:9.62px;font-weight:400;color:#595959;transform:scaleX(0.8700);transform-origin:0 50%;">Março</div><div class="t" style="left:429.31px;top:258.39px;font-size:7.4px;line-height:9.62px;font-weight:400;color:#595959;transform:scaleX(0.8700);transform-origin:0 50%;">3</div><div class="t" style="left:479.26px;top:319.79px;font-size:7.4px;line-height:9.62px;font-weight:400;color:#595959;transform:scaleX(0.8700);transform-origin:0 50%;">Abril</div><div class="t" style="left:483.91px;top:302.29px;font-size:7.4px;line-height:9.62px;font-weight:400;color:#595959;transform:scaleX(0.8700);transform-origin:0 50%;">0</div><div class="t" style="left:533.33px;top:319.79px;font-size:7.4px;line-height:9.62px;font-weight:400;color:#595959;transform:scaleX(0.8700);transform-origin:0 50%;">Maio</div><div class="t" style="left:538.51px;top:302.29px;font-size:7.4px;line-height:9.62px;font-weight:400;color:#595959;transform:scaleX(0.8700);transform-origin:0 50%;">0</div><div class="t" style="left:586.14px;top:319.79px;font-size:7.4px;line-height:9.62px;font-weight:400;color:#595959;transform:scaleX(0.8700);transform-origin:0 50%;">Junho</div><div class="t" style="left:593.11px;top:302.29px;font-size:7.4px;line-height:9.62px;font-weight:400;color:#595959;transform:scaleX(0.8700);transform-origin:0 50%;">0</div><div class="t" style="left:641.81px;top:319.79px;font-size:7.4px;line-height:9.62px;font-weight:400;color:#595959;transform:scaleX(0.8700);transform-origin:0 50%;">Julho</div><div class="t" style="left:647.71px;top:302.29px;font-size:7.4px;line-height:9.62px;font-weight:400;color:#595959;transform:scaleX(0.8700);transform-origin:0 50%;">0</div><div class="t" style="left:694.09px;top:319.79px;font-size:7.4px;line-height:9.62px;font-weight:400;color:#595959;transform:scaleX(0.8700);transform-origin:0 50%;">Agosto</div><div class="t" style="left:702.31px;top:302.29px;font-size:7.4px;line-height:9.62px;font-weight:400;color:#595959;transform:scaleX(0.8700);transform-origin:0 50%;">0</div><div class="t" style="left:744.76px;top:319.79px;font-size:7.4px;line-height:9.62px;font-weight:400;color:#595959;transform:scaleX(0.8700);transform-origin:0 50%;">Setembro</div><div class="t" style="left:756.91px;top:302.29px;font-size:7.4px;line-height:9.62px;font-weight:400;color:#595959;transform:scaleX(0.8700);transform-origin:0 50%;">0</div><div class="t" style="left:801.68px;top:319.79px;font-size:7.4px;line-height:9.62px;font-weight:400;color:#595959;transform:scaleX(0.8700);transform-origin:0 50%;">Outubro</div><div class="t" style="left:811.51px;top:302.29px;font-size:7.4px;line-height:9.62px;font-weight:400;color:#595959;transform:scaleX(0.8700);transform-origin:0 50%;">0</div><div class="t" style="left:853.07px;top:319.79px;font-size:7.4px;line-height:9.62px;font-weight:400;color:#595959;transform:scaleX(0.8700);transform-origin:0 50%;">Novembro</div><div class="t" style="left:866.11px;top:302.29px;font-size:7.4px;line-height:9.62px;font-weight:400;color:#595959;transform:scaleX(0.8700);transform-origin:0 50%;">0</div><div class="t" style="left:907.67px;top:319.79px;font-size:7.4px;line-height:9.62px;font-weight:400;color:#595959;transform:scaleX(0.8700);transform-origin:0 50%;">Dezembro</div><div class="t" style="left:920.71px;top:302.29px;font-size:7.4px;line-height:9.62px;font-weight:400;color:#595959;transform:scaleX(0.8700);transform-origin:0 50%;">0</div><div class="t" style="left:294.00px;top:342.48px;font-size:10.5px;line-height:13.65px;font-weight:700;color:#262626;transform:scaleX(0.9183);transform-origin:0 50%;-webkit-text-stroke:0.30px #262626;">Valor de receita com o serviço por mês</div><div class="t" style="left:311.95px;top:430.39px;font-size:7.4px;line-height:9.62px;font-weight:400;color:#595959;transform:scaleX(0.8700);transform-origin:0 50%;">Janeiro</div><div class="t" style="left:314.81px;top:395.69px;font-size:7.4px;line-height:9.62px;font-weight:400;color:#595959;transform:scaleX(0.8700);transform-origin:0 50%;">R$15</div><div class="t" style="left:363.52px;top:430.39px;font-size:7.4px;line-height:9.62px;font-weight:400;color:#595959;transform:scaleX(0.8700);transform-origin:0 50%;">Fevereiro</div><div class="t" style="left:369.41px;top:359.89px;font-size:7.4px;line-height:9.62px;font-weight:400;color:#595959;transform:scaleX(0.8700);transform-origin:0 50%;">R$45</div><div class="t" style="left:422.76px;top:430.39px;font-size:7.4px;line-height:9.62px;font-weight:400;color:#595959;transform:scaleX(0.8700);transform-origin:0 50%;">Março</div><div class="t" style="left:424.01px;top:359.89px;font-size:7.4px;line-height:9.62px;font-weight:400;color:#595959;transform:scaleX(0.8700);transform-origin:0 50%;">R$45</div><div class="t" style="left:479.86px;top:430.39px;font-size:7.4px;line-height:9.62px;font-weight:400;color:#595959;transform:scaleX(0.8700);transform-origin:0 50%;">Abril</div><div class="t" style="left:480.40px;top:413.19px;font-size:7.4px;line-height:9.62px;font-weight:400;color:#595959;transform:scaleX(0.8700);transform-origin:0 50%;">R$0</div><div class="t" style="left:533.93px;top:430.39px;font-size:7.4px;line-height:9.62px;font-weight:400;color:#595959;transform:scaleX(0.8700);transform-origin:0 50%;">Maio</div><div class="t" style="left:535.00px;top:413.19px;font-size:7.4px;line-height:9.62px;font-weight:400;color:#595959;transform:scaleX(0.8700);transform-origin:0 50%;">R$0</div><div class="t" style="left:586.74px;top:430.39px;font-size:7.4px;line-height:9.62px;font-weight:400;color:#595959;transform:scaleX(0.8700);transform-origin:0 50%;">Junho</div><div class="t" style="left:589.60px;top:413.19px;font-size:7.4px;line-height:9.62px;font-weight:400;color:#595959;transform:scaleX(0.8700);transform-origin:0 50%;">R$0</div><div class="t" style="left:642.41px;top:430.39px;font-size:7.4px;line-height:9.62px;font-weight:400;color:#595959;transform:scaleX(0.8700);transform-origin:0 50%;">Julho</div><div class="t" style="left:644.20px;top:413.19px;font-size:7.4px;line-height:9.62px;font-weight:400;color:#595959;transform:scaleX(0.8700);transform-origin:0 50%;">R$0</div><div class="t" style="left:694.69px;top:430.39px;font-size:7.4px;line-height:9.62px;font-weight:400;color:#595959;transform:scaleX(0.8700);transform-origin:0 50%;">Agosto</div><div class="t" style="left:698.80px;top:413.19px;font-size:7.4px;line-height:9.62px;font-weight:400;color:#595959;transform:scaleX(0.8700);transform-origin:0 50%;">R$0</div><div class="t" style="left:745.36px;top:430.39px;font-size:7.4px;line-height:9.62px;font-weight:400;color:#595959;transform:scaleX(0.8700);transform-origin:0 50%;">Setembro</div><div class="t" style="left:753.40px;top:413.19px;font-size:7.4px;line-height:9.62px;font-weight:400;color:#595959;transform:scaleX(0.8700);transform-origin:0 50%;">R$0</div><div class="t" style="left:802.28px;top:430.39px;font-size:7.4px;line-height:9.62px;font-weight:400;color:#595959;transform:scaleX(0.8700);transform-origin:0 50%;">Outubro</div><div class="t" style="left:808.00px;top:413.19px;font-size:7.4px;line-height:9.62px;font-weight:400;color:#595959;transform:scaleX(0.8700);transform-origin:0 50%;">R$0</div><div class="t" style="left:853.67px;top:430.39px;font-size:7.4px;line-height:9.62px;font-weight:400;color:#595959;transform:scaleX(0.8700);transform-origin:0 50%;">Novembro</div><div class="t" style="left:862.60px;top:413.19px;font-size:7.4px;line-height:9.62px;font-weight:400;color:#595959;transform:scaleX(0.8700);transform-origin:0 50%;">R$0</div><div class="t" style="left:908.27px;top:430.39px;font-size:7.4px;line-height:9.62px;font-weight:400;color:#595959;transform:scaleX(0.8700);transform-origin:0 50%;">Dezembro</div><div class="t" style="left:917.20px;top:413.19px;font-size:7.4px;line-height:9.62px;font-weight:400;color:#595959;transform:scaleX(0.8700);transform-origin:0 50%;">R$0</div><div class="t" style="left:20.95px;top:54.36px;font-size:7.6px;line-height:9.88px;font-weight:400;color:#3A3A3A;transform:scaleX(1.0079);transform-origin:0 50%;">Colar</div><div class="t" style="left:7.50px;top:80.06px;font-size:7.6px;line-height:9.88px;font-weight:400;color:#3A3A3A;transform:scaleX(0.9034);transform-origin:0 50%;">Área de Transferência</div><div class="t" style="left:95.80px;top:35.08px;font-size:8.8px;line-height:11.44px;font-weight:400;color:#3A3A3A;transform:scaleX(0.9223);transform-origin:0 50%;">Calibri</div><div class="t" style="left:178.90px;top:35.08px;font-size:8.8px;line-height:11.44px;font-weight:400;color:#3A3A3A;transform:scaleX(0.8166);transform-origin:0 50%;">12</div><div class="t" style="left:209.70px;top:30.78px;font-size:12.5px;line-height:16.25px;font-weight:400;color:#4A4A4A;transform:scaleX(0.8749);transform-origin:0 50%;">A</div><div class="t" style="left:227.90px;top:34.05px;font-size:9.3px;line-height:12.09px;font-weight:400;color:#4A4A4A;transform:scaleX(0.9834);transform-origin:0 50%;">A</div><div class="t" style="left:98.30px;top:55.13px;font-size:9.5px;line-height:12.35px;font-weight:700;color:#3A3A3A;-webkit-text-stroke:0.30px #3A3A3A;">N</div><div class="t" style="left:117.60px;top:55.13px;font-size:9.5px;line-height:12.35px;font-weight:400;color:#777;transform:scaleX(1.5148);transform-origin:0 50%;font-style:italic;font-family:'Liberation Serif',serif;">I</div><div class="t" style="left:134.00px;top:55.38px;font-size:8.5px;line-height:11.05px;font-weight:400;color:#777;transform:scaleX(0.9168);transform-origin:0 50%;">S</div><div class="t" style="left:152.50px;top:80.16px;font-size:7.6px;line-height:9.88px;font-weight:400;color:#3A3A3A;transform:scaleX(0.8496);transform-origin:0 50%;">Fonte</div><div class="t" style="left:346.80px;top:33.62px;font-size:7.2px;line-height:9.36px;font-weight:400;color:#666;transform:scaleX(0.8750);transform-origin:0 50%;">ab</div><div class="t" style="left:346.80px;top:38.82px;font-size:7.2px;line-height:9.36px;font-weight:400;color:#666;transform:scaleX(0.9739);transform-origin:0 50%;">c</div><div class="t" style="left:287.60px;top:80.36px;font-size:7.6px;line-height:9.88px;font-weight:400;color:#3A3A3A;transform:scaleX(0.9095);transform-origin:0 50%;">Alinhamento</div><div class="t" style="left:387.30px;top:35.08px;font-size:8.8px;line-height:11.44px;font-weight:400;color:#3A3A3A;transform:scaleX(0.8552);transform-origin:0 50%;">Geral</div><div class="t" style="left:415.50px;top:54.0px;font-size:12px;line-height:15.6px;font-weight:400;color:#555;transform:scaleX(0.9839);transform-origin:0 50%;">%</div><div class="t" style="left:432.30px;top:57.35px;font-size:7px;line-height:9.1px;font-weight:400;color:#8A8A8A;transform:scaleX(0.9155);transform-origin:0 50%;">000</div><div class="t" style="left:455.80px;top:54.68px;font-size:6.5px;line-height:8.45px;font-weight:400;color:#666;transform:scaleX(1.0144);transform-origin:0 50%;">.0</div><div class="t" style="left:451.50px;top:59.98px;font-size:6.5px;line-height:8.45px;font-weight:400;color:#666;transform:scaleX(1.1054);transform-origin:0 50%;">.00</div><div class="t" style="left:469.00px;top:54.68px;font-size:6.5px;line-height:8.45px;font-weight:400;color:#666;transform:scaleX(1.1054);transform-origin:0 50%;">.00</div><div class="t" style="left:473.80px;top:59.98px;font-size:6.5px;line-height:8.45px;font-weight:400;color:#666;transform:scaleX(1.0144);transform-origin:0 50%;">.0</div><div class="t" style="left:415.00px;top:80.16px;font-size:7.6px;line-height:9.88px;font-weight:400;color:#3A3A3A;transform:scaleX(0.9476);transform-origin:0 50%;">Número</div><div class="t" style="left:497.50px;top:53.07px;font-size:8.2px;line-height:10.66px;font-weight:400;color:#3A3A3A;transform:scaleX(0.9614);transform-origin:0 50%;">Formatação</div><div class="t" style="left:493.40px;top:64.37px;font-size:8.2px;line-height:10.66px;font-weight:400;color:#3A3A3A;transform:scaleX(0.9907);transform-origin:0 50%;">Condicional</div><div class="t" style="left:547.00px;top:53.07px;font-size:8.2px;line-height:10.66px;font-weight:400;color:#3A3A3A;transform:scaleX(0.9727);transform-origin:0 50%;">Formatar como</div><div class="t" style="left:559.50px;top:64.37px;font-size:8.2px;line-height:10.66px;font-weight:400;color:#3A3A3A;transform:scaleX(0.9362);transform-origin:0 50%;">Tabela</div><div class="t" style="left:605.60px;top:53.07px;font-size:8.2px;line-height:10.66px;font-weight:400;color:#3A3A3A;transform:scaleX(0.9408);transform-origin:0 50%;">Estilos de</div><div class="t" style="left:607.60px;top:64.37px;font-size:8.2px;line-height:10.66px;font-weight:400;color:#3A3A3A;transform:scaleX(0.9389);transform-origin:0 50%;">Célula</div><div class="t" style="left:556.50px;top:80.16px;font-size:7.6px;line-height:9.88px;font-weight:400;color:#3A3A3A;transform:scaleX(0.8670);transform-origin:0 50%;">Estilos</div><div class="t" style="left:667.60px;top:30.34px;font-size:8.4px;line-height:10.92px;font-weight:400;color:#3A3A3A;transform:scaleX(0.9192);transform-origin:0 50%;">Inserir</div><div class="t" style="left:667.60px;top:47.14px;font-size:8.4px;line-height:10.92px;font-weight:400;color:#3A3A3A;transform:scaleX(0.8870);transform-origin:0 50%;">Excluir</div><div class="t" style="left:667.60px;top:63.74px;font-size:8.4px;line-height:10.92px;font-weight:400;color:#3A3A3A;transform:scaleX(0.9210);transform-origin:0 50%;">Formatar</div><div class="t" style="left:670.60px;top:80.36px;font-size:7.6px;line-height:9.88px;font-weight:400;color:#3A3A3A;transform:scaleX(0.8528);transform-origin:0 50%;">Células</div><div class="t" style="left:757.90px;top:53.37px;font-size:8.2px;line-height:10.66px;font-weight:400;color:#3A3A3A;transform:scaleX(0.9241);transform-origin:0 50%;">Classificar</div><div class="t" style="left:758.20px;top:64.37px;font-size:8.2px;line-height:10.66px;font-weight:400;color:#3A3A3A;transform:scaleX(0.9766);transform-origin:0 50%;">e Filtrar</div><div class="t" style="left:799.80px;top:53.37px;font-size:8.2px;line-height:10.66px;font-weight:400;color:#3A3A3A;transform:scaleX(0.9644);transform-origin:0 50%;">Localizar e</div><div class="t" style="left:796.90px;top:64.37px;font-size:8.2px;line-height:10.66px;font-weight:400;color:#3A3A3A;transform:scaleX(0.9512);transform-origin:0 50%;">Selecionar</div><div class="t" style="left:771.90px;top:80.36px;font-size:7.6px;line-height:9.88px;font-weight:400;color:#3A3A3A;transform:scaleX(0.9038);transform-origin:0 50%;">Edição</div><div class="t" style="left:854.60px;top:53.44px;font-size:8.4px;line-height:10.92px;font-weight:400;color:#3A3A3A;transform:scaleX(0.9368);transform-origin:0 50%;">Suplementos</div><div class="t" style="left:857.30px;top:80.36px;font-size:7.6px;line-height:9.88px;font-weight:400;color:#3A3A3A;transform:scaleX(0.9024);transform-origin:0 50%;">Suplementos</div><div class="t" style="left:915.50px;top:53.44px;font-size:8.4px;line-height:10.92px;font-weight:400;color:#3A3A3A;transform:scaleX(0.9266);transform-origin:0 50%;">Numerous.ai</div><div class="t" style="left:909.10px;top:80.36px;font-size:7.6px;line-height:9.88px;font-weight:400;color:#3A3A3A;transform:scaleX(0.9138);transform-origin:0 50%;">Commands Group</div><div class="t" style="left:853.50px;top:9.88px;font-size:8.8px;line-height:11.44px;font-weight:400;color:#333;transform:scaleX(1.0286);transform-origin:0 50%;">Comentários</div><div class="t" style="left:928.60px;top:9.88px;font-size:8.8px;line-height:11.44px;font-weight:400;color:#FFFFFF;transform:scaleX(1.0769);transform-origin:0 50%;">Compartilhamento</div><div class="t" style="left:189.20px;top:97.88px;font-size:10.5px;line-height:13.65px;font-weight:400;color:#3A3A3A;transform:scaleX(1.1013);transform-origin:0 50%;font-style:italic;font-family:'Liberation Serif',serif;">fx</div><div class="t" style="left:25.30px;top:164.26px;font-size:9.6px;line-height:12.48px;font-weight:700;color:#F6C744;transform:scaleX(1.2421);transform-origin:0 50%;-webkit-text-stroke:0.55px #F6C744;">PLANILHAS</div><div class="t" style="left:43.90px;top:173.06px;font-size:9.6px;line-height:12.48px;font-weight:700;color:#F6C744;transform:scaleX(1.1866);transform-origin:0 50%;-webkit-text-stroke:0.55px #F6C744;">TECH</div>
</body></html>
